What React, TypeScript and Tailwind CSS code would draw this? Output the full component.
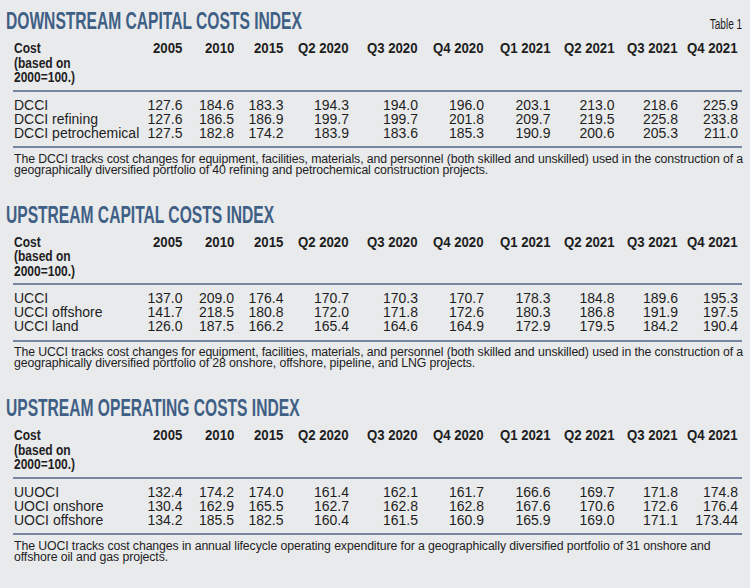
const COLS = ["2005", "2010", "2015", "Q2 2020", "Q3 2020", "Q4 2020", "Q1 2021", "Q2 2021", "Q3 2021", "Q4 2021"];

const GRID = "grid grid-cols-[126px_42.5px_51.5px_49.5px_65.5px_69px_66px_66.5px_64px_63.5px_60px]";

type Row = { label: string; values: string[] };

type Index = {
  title: string;
  rows: Row[];
  note: string[];
};

const INDEXES: Index[] = [
  {
    title: "DOWNSTREAM CAPITAL COSTS INDEX",
    rows: [
      { label: "DCCI", values: ["127.6", "184.6", "183.3", "194.3", "194.0", "196.0", "203.1", "213.0", "218.6", "225.9"] },
      { label: "DCCI refining", values: ["127.6", "186.5", "186.9", "199.7", "199.7", "201.8", "209.7", "219.5", "225.8", "233.8"] },
      { label: "DCCI petrochemical", values: ["127.5", "182.8", "174.2", "183.9", "183.6", "185.3", "190.9", "200.6", "205.3", "211.0"] },
    ],
    note: [
      "The DCCI tracks cost changes for equipment, facilities, materials, and personnel (both skilled and unskilled) used in the construction of a",
      "geographically diversified portfolio of 40 refining and petrochemical construction projects.",
    ],
  },
  {
    title: "UPSTREAM CAPITAL COSTS INDEX",
    rows: [
      { label: "UCCI", values: ["137.0", "209.0", "176.4", "170.7", "170.3", "170.7", "178.3", "184.8", "189.6", "195.3"] },
      { label: "UCCI offshore", values: ["141.7", "218.5", "180.8", "172.0", "171.8", "172.6", "180.3", "186.8", "191.9", "197.5"] },
      { label: "UCCI land", values: ["126.0", "187.5", "166.2", "165.4", "164.6", "164.9", "172.9", "179.5", "184.2", "190.4"] },
    ],
    note: [
      "The UCCI tracks cost changes for equipment, facilities, materials, and personnel (both skilled and unskilled) used in the construction of a",
      "geographically diversified portfolio of 28 onshore, offshore, pipeline, and LNG projects.",
    ],
  },
  {
    title: "UPSTREAM OPERATING COSTS INDEX",
    rows: [
      { label: "UUOCI", values: ["132.4", "174.2", "174.0", "161.4", "162.1", "161.7", "166.6", "169.7", "171.8", "174.8"] },
      { label: "UOCI onshore", values: ["130.4", "162.9", "165.5", "162.7", "162.8", "162.8", "167.6", "170.6", "172.6", "176.4"] },
      { label: "UOCI offshore", values: ["134.2", "185.5", "182.5", "160.4", "161.5", "160.9", "165.9", "169.0", "171.1", "173.44"] },
    ],
    note: [
      "The UOCI tracks cost changes in annual lifecycle operating expenditure for a geographically diversified portfolio of 31 onshore and",
      "offshore oil and gas projects.",
    ],
  },
];

function CostTable({ index, first }: { index: Index; first?: boolean }) {
  return (
    <section className="mb-[26px]">
      {/* Title row */}
      <div className="ml-[6px] w-[736px] h-[26px] flex items-baseline justify-between whitespace-nowrap">
        <h2 className="inline-block origin-left scale-x-[0.65] text-[24px] leading-[26px] font-bold text-[#3f5f85]">
          {index.title}
        </h2>
        {first && (
          <span className="inline-block origin-right scale-x-[0.72] text-[14px] leading-[26px] text-[#1e1e1e]">
            Table 1
          </span>
        )}
      </div>

      <div className="ml-[13px] w-[729px]">
        {/* Column headers */}
        <div className={`${GRID} ml-[1px] mt-[7px] text-[15px] leading-[14.5px] font-bold whitespace-nowrap`}>
          <div className="origin-left scale-x-[0.8]">
            Cost
            <br />
            (based on
            <br />
            2000=100.)
          </div>
          {COLS.map((c) => (
            <div key={c} className="text-right">
              <span className="inline-block origin-right scale-x-[0.88]">{c}</span>
            </div>
          ))}
        </div>

        <div className="mt-[5px] h-[2px] bg-[#7886a2]" />

        {/* Data rows */}
        <div className="ml-[1px] mt-[6px] text-[14px] leading-[14px] whitespace-nowrap">
          {index.rows.map((r) => (
            <div key={r.label} className={GRID}>
              <div>{r.label}</div>
              {r.values.map((v, i) => (
                <div key={i} className="text-right">
                  {v}
                </div>
              ))}
            </div>
          ))}
        </div>

        <div className="mt-[6.5px] h-[2px] bg-[#7886a2]" />

        <p className="ml-[1px] mt-[5.5px] text-[12.3px] leading-[11px] tracking-[-0.1px] whitespace-nowrap">
          {index.note[0]}
          <br />
          {index.note[1]}
        </p>
      </div>
    </section>
  );
}

export default function App() {
  return (
    <div className="w-[750px] h-[588px] overflow-hidden bg-[#e9eaec] pt-[8px] text-[#1e1e1e] font-['Liberation_Sans',Arial,sans-serif]">
      {INDEXES.map((idx, i) => (
        <CostTable key={idx.title} index={idx} first={i === 0} />
      ))}
    </div>
  );
}
